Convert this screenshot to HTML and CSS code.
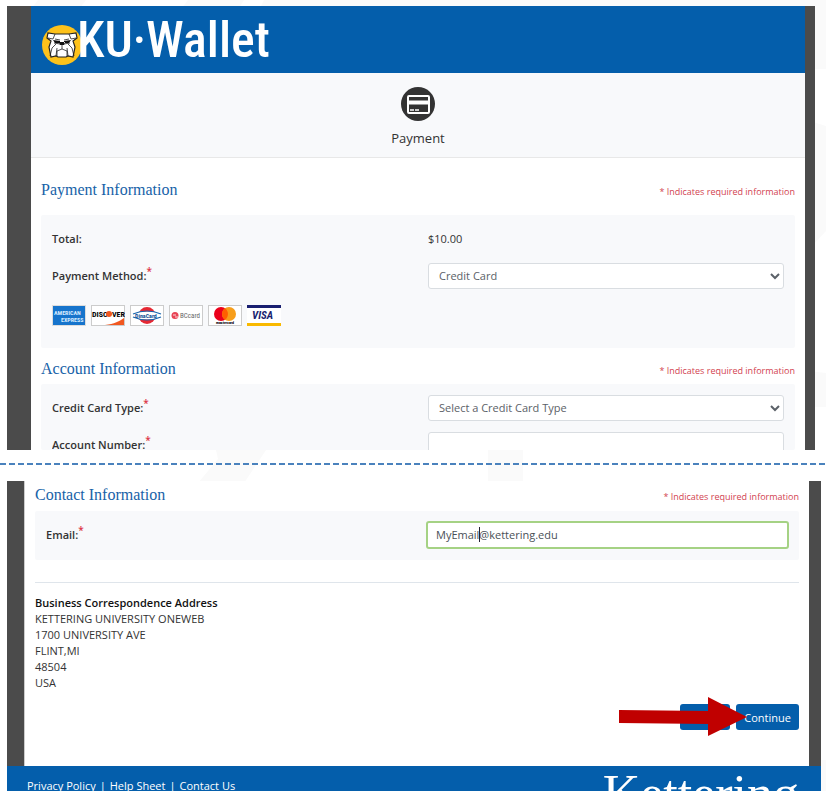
FILE: index.html
```html
<!DOCTYPE html>
<html lang="en">
<head>
  <meta charset="UTF-8" />
  <meta name="viewport" content="width=device-width, initial-scale=1.0"/>
  <title>Payment | KU-Wallet</title>
  <link rel="stylesheet" href="styles.css">
</head>
<body>

  <svg class="backdrop" width="826" height="791" viewBox="0 0 826 791" aria-hidden="true">
    <path d="M38 0h48l-6 8H32zM188 0h56l-5 8h-57zM264 0h562v69h-20V8H260zM800 118l26 8v105l-26 28zM800 370l26 3v34h-26zM216 450h50l-22 33h-46l20-24zM488 450h35v33h-35zM810 760h16v31h-16z" />
  </svg>

  <section class="screen screen-top">
    <div class="page">
      <header>
        <svg class="mascot" width="40" height="40" viewBox="0 0 40 40" aria-hidden="true">
          <circle cx="20" cy="20" r="20" fill="#fdc21b" />
          <path d="M13 9h14l7-1 1 5-4 3 2 6-2 10-5-1-2 1h-8l-2-1-5 1-2-10 2-6-4-3 1-5z" fill="#fff" stroke="#222" stroke-width="1.2" />
          <path d="M6 13l5 1 2-5M34 13l-5 1-2-5M13 14l5 1M27 14l-5 1M14 19l-4 4-2 8M26 19l4 4 2 8M15 23l-1 8M25 23l1 8M20 20v4l-5 2v5M20 24l5 2v5M12 18l6 1M28 18l-6 1" fill="none" stroke="#222" stroke-width=".8" />
          <path d="M11 15l7 1v2h-5zM29 15l-7 1v2h5zM17 17h6l-1 3h-4z" fill="#111" />
        </svg>
        <span class="brand">KU·Wallet</span>
      </header>

      <div class="step">
        <svg width="36" height="36" viewBox="0 0 36 36" aria-hidden="true">
          <circle cx="18" cy="18" r="17" fill="#333" />
          <rect x="8" y="10" width="21" height="17" rx="1" fill="#333" stroke="#fff" stroke-width="2" />
          <path d="M8 16.5h21" stroke="#fff" stroke-width="4" />
          <path d="M10 24h4M15 24h4" stroke="#fff" stroke-width="1.5" />
        </svg>
        <span>Payment</span>
      </div>

      <main>
        <div class="section-head first">
          <h2>Payment Information</h2>
          <p class="note">* Indicates required information</p>
        </div>
        <div class="panel payment">
          <div class="row">
            <span class="label">Total:</span>
            <span>$10.00</span>
          </div>
          <div class="row">
            <label for="method">Payment Method:<sup>*</sup></label>
            <select id="method"><option>Credit Card</option></select>
          </div>
          <div class="cards">
            <svg viewBox="0 0 34 21" role="img" aria-label="American Express">
              <rect width="34" height="21" fill="#ddd" /><rect x="1" y="1" width="32" height="19" fill="#1674cc" />
              <text x="2" y="10" font-size="6" fill="#d5ebff">AMERICAN</text>
              <text x="9" y="17" font-size="6" fill="#d5ebff">EXPRESS</text>
            </svg>
            <svg viewBox="0 0 34 21" role="img" aria-label="Discover">
              <rect x=".5" y=".5" width="33" height="20" fill="#fff" stroke="#ccc" />
              <path d="M14 20c9-1 15-4 19-7v7z" fill="#f1571f" />
              <text x="1" y="12" font-size="8">DISC</text><circle cx="18" cy="9" r="3" fill="#f1571f" /><text x="21" y="12" font-size="8">VER</text>
            </svg>
            <svg viewBox="0 0 34 21" role="img" aria-label="DinaCard">
              <rect x=".5" y=".5" width="33" height="20" fill="#fff" stroke="#ccc" />
              <circle cx="17" cy="10.5" r="8.5" fill="#e52833" />
              <ellipse cx="17" cy="10.5" rx="15" ry="4" fill="#fff" />
              <path d="M3 9q14-6 28 0M3 12q14 6 28 0" fill="none" stroke="#1765ae" stroke-width="1.2" />
              <text x="5" y="13" font-size="6" fill="#124f94">DinaCard</text>
            </svg>
            <svg viewBox="0 0 34 21" role="img" aria-label="BC Card">
              <rect x=".5" y=".5" width="33" height="20" fill="#fff" stroke="#ccc" />
              <circle cx="6" cy="10.5" r="3.5" fill="#e84354" /><path d="M4 10h3M6 12h3" stroke="#fff" stroke-width=".8" />
              <text x="11" y="13" font-size="7" fill="#666" class="thin">BCcard</text>
            </svg>
            <svg viewBox="0 0 34 21" role="img" aria-label="Mastercard">
              <rect x=".5" y=".5" width="33" height="20" fill="#fff" stroke="#ccc" />
              <circle cx="13" cy="9" r="7" fill="#eb001b" /><circle cx="21" cy="9" r="7" fill="#f79e1b" />
              <path d="M17 3.3a7 7 0 0 1 0 11.4 7 7 0 0 1 0-11.4" fill="#ff5f00" />
              <text x="8" y="19" font-size="4">mastercard</text>
            </svg>
            <svg viewBox="0 0 34 21" role="img" aria-label="Visa">
              <rect width="34" height="21" fill="#fff" /><path d="M0 0h34v3H0z" fill="#191f70" /><path d="M0 18h34v3H0z" fill="#f9b900" />
              <text x="5" y="14" font-size="11" fill="#191f70" class="slant">VISA</text>
            </svg>
          </div>
        </div>

        <div class="section-head">
          <h2>Account Information</h2>
          <p class="note">* Indicates required information</p>
        </div>
        <div class="panel account">
          <div class="row">
            <label for="card-type">Credit Card Type:<sup>*</sup></label>
            <select id="card-type"><option>Select a Credit Card Type</option></select>
          </div>
          <div class="cutoff">
            <div class="row">
              <label for="account-number">Account Number:<sup>*</sup></label>
              <input type="text" id="account-number" />
            </div>
          </div>
        </div>
      </main>
    </div>
  </section>

  <div class="divider"></div>

  <section class="screen screen-bottom">
    <div class="page">
      <div class="section-head">
        <h2>Contact Information</h2>
        <p class="note">* Indicates required information</p>
      </div>
      <div class="panel contact">
        <div class="row">
          <label for="email">Email:<sup>*</sup></label>
          <div class="email-field">
            <input type="text" id="email" value="MyEmail@kettering.edu" />
            <span class="caret"></span>
          </div>
        </div>
      </div>

      <address>
        <strong>Business Correspondence Address</strong><br />
        KETTERING UNIVERSITY ONEWEB<br />
        1700 UNIVERSITY AVE<br />
        FLINT,MI<br />
        48504<br />
        USA
      </address>

      <div class="actions">
        <button type="button" class="back" aria-label="Back"></button>
        <button type="button">Continue</button>
        <svg class="arrow" width="129" height="40" viewBox="0 0 129 40" aria-hidden="true">
          <path d="M0 13l89 1V0l39 20-39 19V27L0 26z" fill="#c00000" />
        </svg>
      </div>
    </div>

    <footer>
      <nav>
        <a href="#">Privacy Policy</a><span>|</span><a href="#">Help Sheet</a><span>|</span><a href="#">Contact Us</a>
      </nav>
      <div class="wordmark">Kettering</div>
    </footer>
  </section>

</body>
</html>
```
FILE: styles.css
```css
* {
  margin: 0;
  padding: 0;
  box-sizing: border-box;
}

body {
  height: 100vh;
  overflow: hidden;
  font-family: 'Open Sans', 'Noto Sans', sans-serif;
  font-size: 11px;
  line-height: 16px;
  background-color: #fff;
  color: #333;
}

.backdrop {
  position: absolute;
  top: 0;
  left: 0;
  z-index: -1;
  fill: #fafafa;
}

.screen {
  background-color: #4b4b4b;
}

.screen-top {
  margin: 6px 11px 0 7px;
  padding: 0 10px 0 24px;
}

.screen-bottom {
  margin: 0 5px 0 7px;
}

.page {
  background-color: #fff;
}

header {
  display: flex;
  align-items: center;
  height: 67px;
  padding-left: 11px;
  background-color: #045eab;
  overflow: hidden;
}

.mascot {
  margin-top: 10px;
}

.brand {
  margin-left: -5px;
  color: #fff;
  font-family: 'Roboto Condensed', Roboto, sans-serif;
  font-size: 50px;
  line-height: 60px;
  font-weight: 500;
  white-space: nowrap;
}

.step {
  display: flex;
  flex-direction: column;
  align-items: center;
  gap: 6px;
  padding: 13px 0 9px;
  background-color: #f8f9fb;
  border-bottom: 1px solid #e8e8e8;
  font-size: 13px;
  line-height: 20px;
}

main {
  padding: 0 10px;
}

.section-head {
  display: flex;
  justify-content: space-between;
  align-items: baseline;
  padding: 11px 0 5px;
}

.section-head.first {
  padding: 22px 0 15px;
}

h2 {
  font-family: 'Liberation Serif', serif;
  font-size: 16px;
  line-height: 20px;
  font-weight: normal;
  color: #1762a8;
}

.note {
  font-size: 9px;
  color: #d2424f;
}

.panel {
  padding: 5px 11px 0;
  background-color: #f8f9fb;
  border-radius: 2px;
}

.payment {
  padding-bottom: 22px;
}

.contact {
  padding-bottom: 7px;
}

.row {
  display: grid;
  grid-template-columns: 1fr 1fr;
  column-gap: 20px;
  align-items: center;
  height: 37px;
}

label,
.label {
  font-weight: 600;
}

sup {
  color: #dc3545;
  font-size: 10px;
  line-height: 0;
}

select,
input {
  width: 100%;
  height: 26px;
  padding: 0 10px;
  border: 1px solid #d9dde1;
  border-radius: 3px;
  background-color: #fff;
  color: #5b6168;
  font-family: inherit;
  font-size: 11px;
}

select {
  padding: 0 2px 0 6px;
}

/* second field runs past the end of the visible area */
.cutoff {
  height: 24px;
  overflow: hidden;
}

.cards {
  display: flex;
  gap: 5px;
  padding-top: 11px;
}

.cards svg {
  width: 34px;
  height: 21px;
}

.cards text {
  font-family: 'Roboto Condensed', Roboto, sans-serif;
  font-weight: bold;
}

.cards .thin {
  font-weight: normal;
}

.cards .slant {
  font-style: italic;
}

.divider {
  height: 2px;
  margin: 13px 0 16px;
  background: repeating-linear-gradient(to right, #4a82bd 0, #4a82bd 6px, transparent 6px, transparent 9px);
}

.screen-bottom .page {
  margin: 0 12px 0 17px;
  padding: 0 10px 36px;
  border-left: 1px solid #ccc;
}

.screen-bottom .section-head {
  padding: 4px 0 6px;
}

.email-field {
  position: relative;
  margin: 0 -1px;
}

.email-field input {
  display: block;
  height: 28px;
  padding: 0 8px;
  border: 2px solid #a5d284;
  color: #495057;
}

.caret {
  position: absolute;
  top: 6px;
  left: 53px;
  width: 1px;
  height: 15px;
  background-color: #223;
}

address {
  margin-top: 22px;
  padding-top: 12px;
  border-top: 1px solid #dfe5eb;
  font-style: normal;
}

address strong {
  font-weight: 600;
  color: #111;
}

.actions {
  position: relative;
  display: flex;
  justify-content: flex-end;
  gap: 6px;
  margin-top: 13px;
}

button {
  height: 26px;
  padding: 0 8px;
  border: none;
  border-radius: 3px;
  background-color: #045eab;
  color: #fff;
  font-family: inherit;
  font-size: 11px;
  cursor: pointer;
}

.back {
  width: 50px;
}

.arrow {
  position: absolute;
  right: 51px;
  top: -7px;
}

footer {
  display: flex;
  justify-content: space-between;
  align-items: flex-start;
  padding: 0 22px 0 20px;
  background-color: #045eab;
  color: #fff;
}

footer nav {
  display: flex;
  gap: 4px;
  padding-top: 12px;
}

footer a {
  color: #fff;
  text-decoration: none;
}

.wordmark {
  font-family: 'Liberation Serif', serif;
  font-size: 52px;
  line-height: 56px;
}
```
